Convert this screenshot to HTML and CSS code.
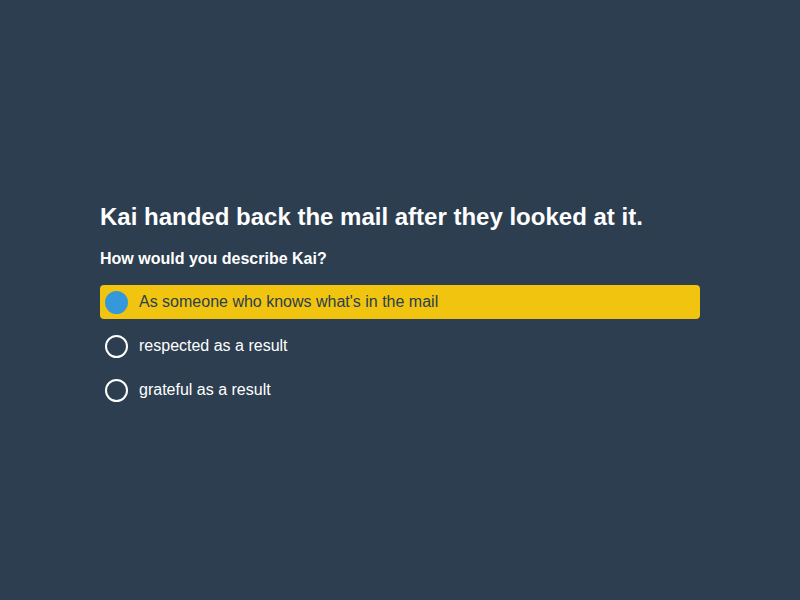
FILE: index.html
```html
<!DOCTYPE html>
<html>
<head>
<meta charset="utf-8">
<link rel="stylesheet" href="styles.css">
</head>
<body>
<main class="quiz">
  <h1 class="question">Kai handed back the mail after they looked at it.</h1>
  <h2 class="prompt">How would you describe Kai?</h2>
  <div class="options">
    <div class="option selected"><span class="radio"></span><span class="label">As someone who knows what's in the mail</span></div>
    <div class="option"><span class="radio"></span><span class="label">respected as a result</span></div>
    <div class="option"><span class="radio"></span><span class="label">grateful as a result</span></div>
  </div>
</main>
</body>
</html>
```
FILE: styles.css
```css
html, body {
  margin: 0;
  height: 100%;
}
body {
  background: #2c3e50;
  font-family: "Liberation Sans", Arial, sans-serif;
  color: #ffffff;
  display: flex;
  align-items: center;
  justify-content: center;
}
.quiz {
  width: 600px;
  padding-top: 10px;
}
.question {
  font-size: 24px;
  font-weight: bold;
  margin: 0 0 19px;
}
.prompt {
  font-size: 16px;
  font-weight: bold;
  margin: 0 0 17px;
}
.options {
  display: flex;
  flex-direction: column;
  gap: 10px;
}
.option {
  display: flex;
  align-items: center;
  height: 34px;
  padding: 0 5px;
  border-radius: 4px;
  font-size: 16px;
}
.option.selected {
  background: #f1c40f;
  color: #2c3e50;
}
.radio {
  box-sizing: border-box;
  width: 23px;
  height: 23px;
  border: 2px solid #ffffff;
  border-radius: 50%;
  margin-right: 11px;
  flex: none;
}
.selected .radio {
  background: #3498db;
  border-color: #3498db;
}
```
